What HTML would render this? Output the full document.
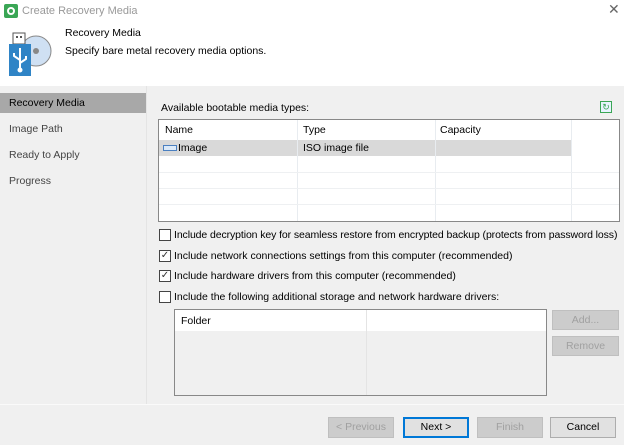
<!DOCTYPE html>
<html><head><style>
*{margin:0;padding:0;box-sizing:border-box}
body{width:624px;height:445px;position:relative;overflow:hidden;background:#fff;font-family:"Liberation Sans",sans-serif;font-size:10.5px;color:#000}
.a{position:absolute}
.t{position:absolute;white-space:nowrap;line-height:14px}
.cb{position:absolute;width:12px;height:12px;border:1px solid #444;background:#fff;font-size:10px;line-height:10px;text-align:center;color:#333}
.btn{position:absolute;height:21px;border:1px solid #adadad;background:#e1e1e1;text-align:center;line-height:19px}
.dis{background:#cccccc;border-color:#bfbfbf;color:#a0a0a0}
</style></head><body>
<div class="a" style="left:4px;top:4px;width:14px;height:14px;background:#3aa655;border-radius:2px"><div class="a" style="left:3px;top:3px;width:8px;height:8px;border:2px solid #fff;border-radius:50%"></div></div>
<div class="t" style="left:22px;top:4px;color:#999;font-size:11px">Create Recovery Media</div>
<div class="t" style="left:608px;top:2px;color:#666;font-size:14px">✕</div>
<svg class="a" style="left:4px;top:30px" width="48" height="48" viewBox="0 0 48 48">
<circle cx="32" cy="21" r="15" fill="#cfe0f3" stroke="#888" stroke-width="1"/>
<circle cx="32" cy="21" r="3" fill="#888"/>
<rect x="9" y="3" width="12" height="11" fill="#fff" stroke="#555"/>
<rect x="12" y="6" width="2" height="2" fill="#555"/><rect x="16" y="6" width="2" height="2" fill="#555"/>
<rect x="5" y="14" width="22" height="32" fill="#2f84c6"/>
<path d="M16 18v22M16 30l-6-4v-3M16 33l6-4v-3" stroke="#fff" stroke-width="2" fill="none"/>
<circle cx="16" cy="40" r="2.5" fill="#fff"/>
</svg>
<div class="t" style="left:65px;top:26px">Recovery Media</div>
<div class="t" style="left:65px;top:44px">Specify bare metal recovery media options.</div>
<div class="a" style="left:0;top:86px;width:624px;height:359px;background:#f0f0f0"></div>
<div class="a" style="left:146px;top:86px;width:1px;height:318px;background:#e4e4e4"></div>
<div class="a" style="left:0;top:93px;width:146px;height:20px;background:#a8a8a8"></div>
<div class="t" style="left:9px;top:96px">Recovery Media</div>
<div class="t" style="left:9px;top:122px;color:#444">Image Path</div>
<div class="t" style="left:9px;top:148px;color:#444">Ready to Apply</div>
<div class="t" style="left:9px;top:174px;color:#444">Progress</div>
<div class="t" style="left:161px;top:101px">Available bootable media types:</div>
<div class="a" style="left:600px;top:101px;width:12px;height:12px;border:1px solid #3aa655;background:#e8f4ff;color:#3aa655;font-size:9px;line-height:10px;text-align:center">↻</div>
<div class="a" style="left:158px;top:119px;width:462px;height:103px;background:#fff;border:1px solid #888"></div>
<div class="a" style="left:159px;top:140px;width:412px;height:16px;background:#d9d9d9"></div>
<div class="a" style="left:297px;top:120px;width:1px;height:101px;background:#e8ecf0"></div>
<div class="a" style="left:435px;top:120px;width:1px;height:101px;background:#e8ecf0"></div>
<div class="a" style="left:571px;top:120px;width:1px;height:101px;background:#e8ecf0"></div>
<div class="a" style="left:159px;top:172px;width:460px;height:1px;background:#eef0f2"></div>
<div class="a" style="left:159px;top:188px;width:460px;height:1px;background:#eef0f2"></div>
<div class="a" style="left:159px;top:204px;width:460px;height:1px;background:#eef0f2"></div>
<div class="t" style="left:165px;top:123px">Name</div>
<div class="t" style="left:303px;top:123px">Type</div>
<div class="t" style="left:440px;top:123px">Capacity</div>
<div class="a" style="left:163px;top:145px;width:14px;height:6px;border:1px solid #4a7fc0;background:#dbe9f8"></div>
<div class="t" style="left:178px;top:141px">Image</div>
<div class="t" style="left:303px;top:141px">ISO image file</div>
<div class="cb" style="left:159px;top:229px"></div>
<div class="t" style="left:174px;top:228px;letter-spacing:-0.1px">Include decryption key for seamless restore from encrypted backup (protects from password loss)</div>
<div class="cb" style="left:159px;top:250px">✓</div>
<div class="t" style="left:174px;top:249px">Include network connections settings from this computer (recommended)</div>
<div class="cb" style="left:159px;top:270px">✓</div>
<div class="t" style="left:174px;top:269px">Include hardware drivers from this computer (recommended)</div>
<div class="cb" style="left:159px;top:291px"></div>
<div class="t" style="left:174px;top:290px">Include the following additional storage and network hardware drivers:</div>
<div class="a" style="left:174px;top:309px;width:373px;height:87px;border:1px solid #888;background:#f0f0f0"></div>
<div class="a" style="left:175px;top:310px;width:371px;height:21px;background:#fff"></div>
<div class="a" style="left:366px;top:310px;width:1px;height:85px;background:#e4e4e4"></div>
<div class="t" style="left:181px;top:314px">Folder</div>
<div class="btn dis" style="left:552px;top:310px;width:67px;height:20px">Add...</div>
<div class="btn dis" style="left:552px;top:336px;width:67px;height:20px">Remove</div>
<div class="a" style="left:0;top:404px;width:624px;height:1px;background:#fafafa"></div>
<div class="btn dis" style="left:328px;top:417px;width:66px">&lt; Previous</div>
<div class="btn" style="left:403px;top:417px;width:66px;border:2px solid #0078d7;line-height:17px">Next &gt;</div>
<div class="btn dis" style="left:477px;top:417px;width:66px">Finish</div>
<div class="btn" style="left:550px;top:417px;width:66px">Cancel</div>
</body></html>
